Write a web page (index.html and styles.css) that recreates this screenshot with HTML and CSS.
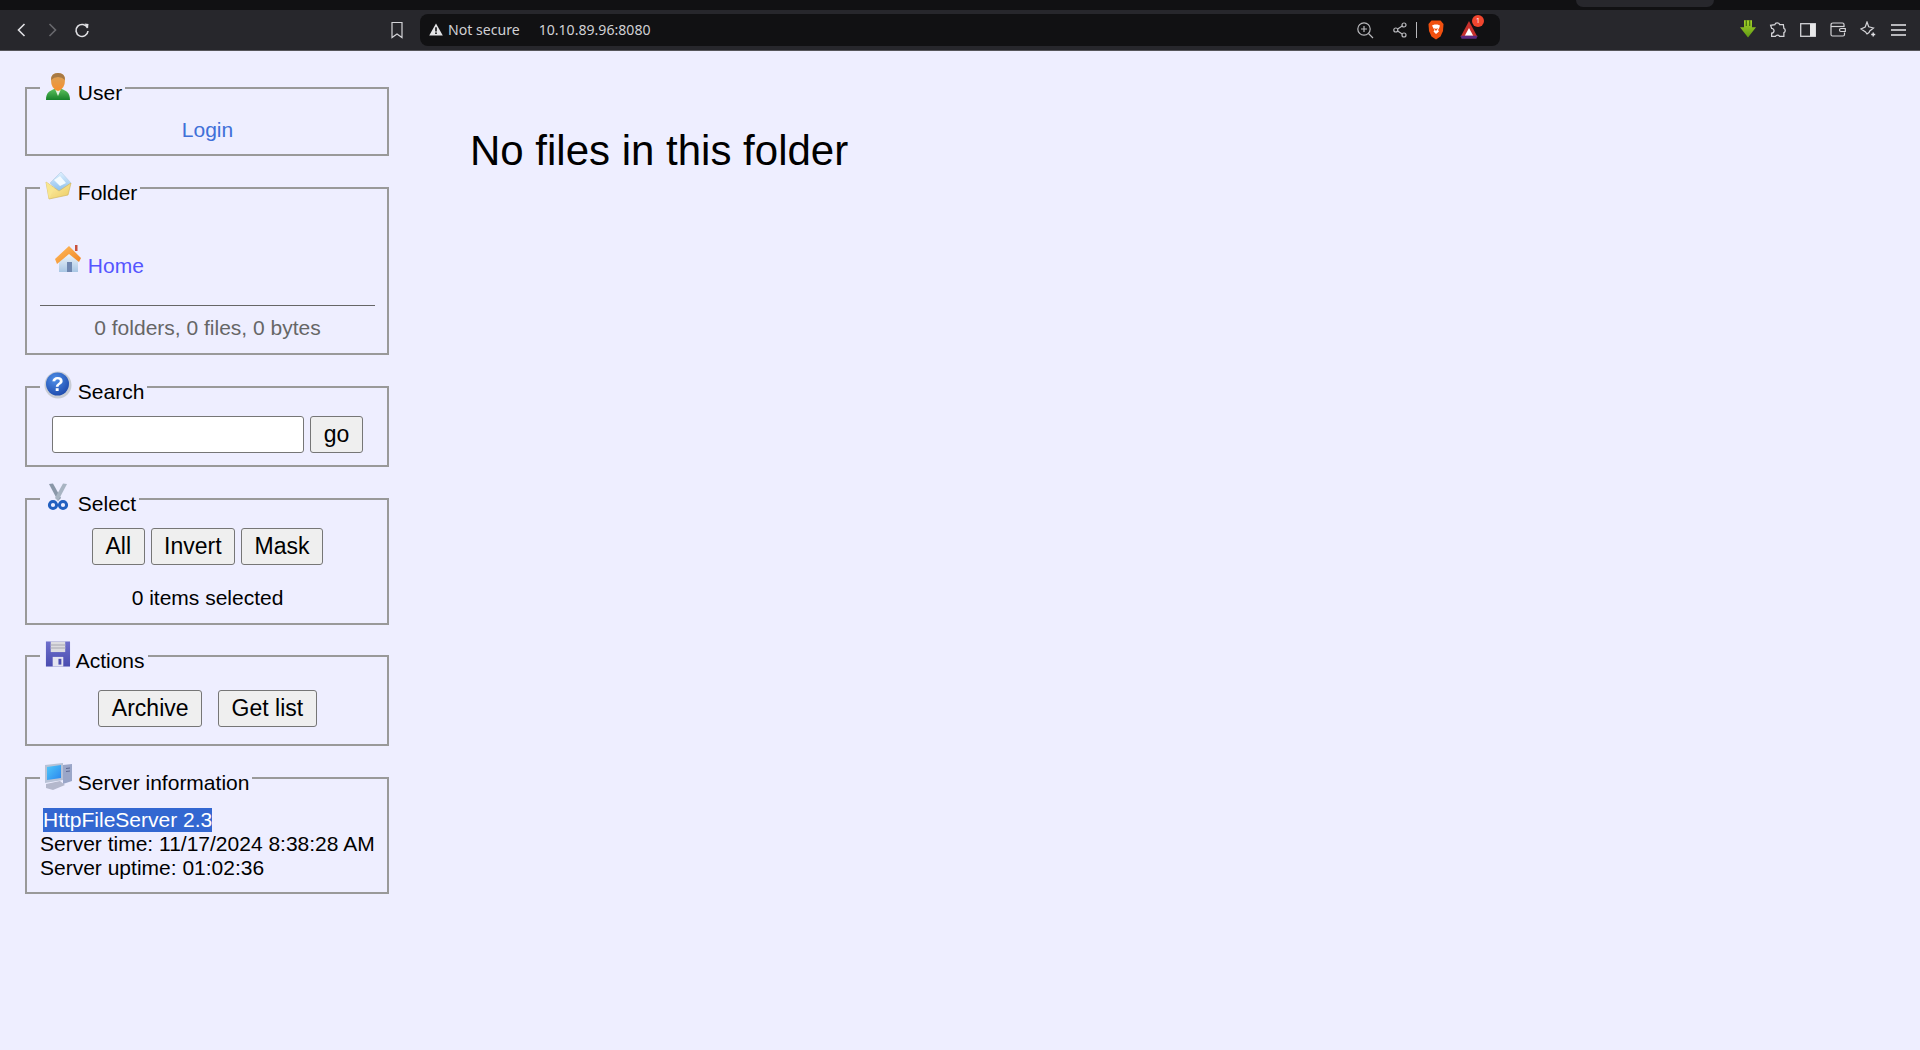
FILE: index.html
```html
<!DOCTYPE html>
<html lang="en">
<head>
  <meta charset="UTF-8">
  <title>HFS /</title>
  <link rel="stylesheet" href="styles.css">
</head>
<body>
  <svg class="defs" width="0" height="0" aria-hidden="true">
    <defs>
      <linearGradient id="g-skin" x1="0" y1="0" x2="0" y2="1"><stop offset="0" stop-color="#d9a45c"/><stop offset="1" stop-color="#f58f2e"/></linearGradient>
      <linearGradient id="g-green" x1="0" y1="0" x2="0" y2="1"><stop offset="0" stop-color="#5cbf5c"/><stop offset="1" stop-color="#16812a"/></linearGradient>
      <linearGradient id="g-env" x1="0" y1="0" x2="1" y2="1"><stop offset="0" stop-color="#fff2b0"/><stop offset="1" stop-color="#eccb60"/></linearGradient>
      <linearGradient id="g-sheet" x1="0" y1="0" x2="0" y2="1"><stop offset="0" stop-color="#dff0ff"/><stop offset="1" stop-color="#7fb8ea"/></linearGradient>
      <linearGradient id="g-roof" x1="0" y1="0" x2="1" y2="1"><stop offset="0" stop-color="#ffc060"/><stop offset="1" stop-color="#f08020"/></linearGradient>
      <linearGradient id="g-wall" x1="0" y1="0" x2="0" y2="1"><stop offset="0" stop-color="#ffffff"/><stop offset="1" stop-color="#a8c6e4"/></linearGradient>
      <radialGradient id="g-ball" cx="0.4" cy="0.3" r="0.8"><stop offset="0" stop-color="#4f8fe8"/><stop offset="1" stop-color="#1a45a8"/></radialGradient>
      <linearGradient id="g-disk" x1="0" y1="0" x2="0" y2="1"><stop offset="0" stop-color="#6f70cc"/><stop offset="1" stop-color="#4a4cb0"/></linearGradient>
      <linearGradient id="g-screen" x1="0" y1="0" x2="1" y2="1"><stop offset="0" stop-color="#50c8fa"/><stop offset="1" stop-color="#2a86ee"/></linearGradient>
      <linearGradient id="g-arrow" x1="0" y1="0" x2="0" y2="1"><stop offset="0" stop-color="#a6d32a"/><stop offset="1" stop-color="#5f9a14"/></linearGradient>
    </defs>
  </svg>

  <div class="tabstrip"><div class="tab-edge"></div></div>

  <header class="toolbar">
    <div class="nav-left">
      <button class="tb-btn"><svg width="16" height="16" viewBox="0 0 16 16" class="line"><path d="M10.5 2 4.5 8l6 6"/></svg></button>
      <button class="tb-btn dim"><svg width="16" height="16" viewBox="0 0 16 16" class="line"><path d="M5.5 2l6 6-6 6"/></svg></button>
      <button class="tb-btn"><svg width="18" height="18" viewBox="0 0 18 18" class="line"><path d="M14.5 7A6 6 0 1 0 15 10"/><path class="solid" d="M11.5 2.5 15.5 3l-.5 4.500z"/></svg></button>
      <button class="tb-btn bookmark"><svg width="16" height="18" viewBox="0 0 16 18" class="line thin"><path d="M3 1.500h10v15l-5-3.500-5 3.500z"/></svg></button>
    </div>

    <div class="urlbar">
      <svg class="warn" width="14" height="13" viewBox="0 0 14 13"><path d="M7 0.500 13.800 12.500H0.200z" fill="#e4e4e6"/><rect x="6.200" y="4.300" width="1.600" height="4.200" fill="#111113"/><rect x="6.200" y="9.400" width="1.600" height="1.600" fill="#111113"/></svg>
      <span class="secure">Not secure</span>
      <span class="address">10.10.89.96:8080</span>
      <div class="url-tools">
        <svg width="18" height="18" viewBox="0 0 18 18" class="line thin"><circle cx="8" cy="8" r="6.200"/><path d="M12.500 12.500 17 17M8 5v6M5 8h6"/></svg>
        <svg class="share" width="14" height="16" viewBox="0 0 14 16"><g fill="none" stroke="#b9b9bd" stroke-width="1.200"><circle cx="2.800" cy="8" r="2"/><circle cx="11" cy="3" r="2"/><circle cx="11" cy="13" r="2"/><path d="M4.600 7 9.200 4M4.600 9l4.600 3"/></g></svg>
        <span class="url-sep"></span>
        <svg class="brave" width="16" height="20" viewBox="0 0 16 20"><path d="M3.500 0.500h9L15.500 4 15 11l-2.500 5.500L8 19.500 3.500 16.500 1 11 .5 4z" fill="#f1500f"/><path d="M4 5.500 6.500 4.500h3l2.500 1-.8 2.500-1.200 2 1 1.500L8 14l-2.500-2.500 1-1.500-1.200-2z" fill="#fff"/><path d="M6 8l1.500.8H8.500L10 8 8.700 10.500H7.300z" fill="#f1500f"/></svg>
        <span class="bat">
          <svg width="18" height="18" viewBox="0 0 16 17"><path d="M8 0 16 15H0z" fill="#c8302c"/><path d="M8 6.500 12 14H4z" fill="#fff"/><path d="M0 14h16l-1 2.800H1z" fill="#5e2a80"/></svg>
          <span class="bat-badge">1</span>
        </span>
      </div>
    </div>

    <div class="tools">
      <button class="tb-btn"><svg width="16" height="19" viewBox="0 0 14 16"><path d="M3.500 0h7v6H14l-7 9-7-9h3.500z" fill="url(#g-arrow)"/><path d="M5 0h1v5H5zM8 0h1v5H8z" fill="#3e6b0c"/></svg></button>
      <button class="tb-btn puzzle"><svg width="17" height="17" viewBox="0 0 16 16" class="line thin"><path d="M5.500 3.500a2.300 2.300 0 0 1 4.500 0h3.500l.5 3.500a2.200 2.200 0 0 1 0 4v3.500H10a2.200 2.200 0 0 0-4 0H2.500V11.500a2.200 2.200 0 0 0 0-4.500L1.500 4z"/></svg></button>
      <button class="tb-btn"><svg width="16" height="14" viewBox="0 0 16 14"><rect x="0.700" y="0.700" width="14.600" height="12.600" fill="none" stroke="#d4d4d8" stroke-width="1.300"/><rect x="10" y="1" width="5.500" height="12" fill="#e8e8ea"/></svg></button>
      <button class="tb-btn"><svg width="16" height="15" viewBox="0 0 16 15" class="line thin"><path d="M14 4.500V2.500Q14 1 12.500 1H3Q1 1 1 3v9.500Q1 14 2.500 14H13q1.500 0 1.500-1.500V10.500"/><path d="M1 4.500h13.500"/><path d="M15.300 6.500H11q-1.500 0-1.500 1.500T11 9.500h4.300z"/></svg></button>
      <button class="tb-btn"><svg width="16" height="17" viewBox="0 0 16 17" class="line thin"><path d="M7 1l1.700 4.800L13.500 7l-3.700 3-.8 1.500L7 13l-1.500-2L1 8l4.200-2z"/><path class="solid" d="M12.500 11.500h1.400v1.300h1.300v1.400h-1.300v1.300h-1.400v-1.300h-1.300v-1.400h1.300z"/></svg></button>
      <button class="tb-btn"><svg width="15" height="12" viewBox="0 0 15 12" class="line menu"><path d="M0 1h15M0 6h15M0 11h15"/></svg></button>
    </div>
  </header>

  <div class="page">
    <aside class="panels">
      <fieldset class="panel panel-user">
        <legend>
          <svg class="ico" viewBox="0 0 28 28"><path d="M2 28c0-8 4-9 8-11h8c4 2 8 3 8 11z" fill="url(#g-green)"/><path d="M11 17h6l-3 7z" fill="#e6f3e0"/><path d="M7 8q0-7 7-7t7 7q0 9-7 11-7-2-7-11z" fill="url(#g-skin)"/><path d="M7 8q0-7 7-7t7 7q-3-3-7-3T7 8z" fill="#a87a45"/></svg>
          User
        </legend>
        <div class="center"><a class="login" href="#">Login</a></div>
      </fieldset>

      <fieldset class="panel panel-folder">
        <legend>
          <svg class="ico" viewBox="0 0 28 28"><path d="M6 11 17 0l10 11-10 11z" fill="url(#g-sheet)" stroke="#b4cce2" stroke-width=".6"/><path d="M10 8l6-4 6 7-6 3z" fill="#f4fbff"/><path d="M2 10l13 9 12-8-3 12-19 4z" fill="url(#g-env)" stroke="#d2b860" stroke-width=".7"/><path d="M2 10l8 6-5 11z" fill="#f8e690"/></svg>
          Folder
        </legend>
        <div class="home-row">
          <svg class="ico" viewBox="0 0 28 28"><path d="M5 13 15 5l9 8v14H5z" fill="url(#g-wall)"/><path d="M13 17h5v10h-5z" fill="#6f87b0"/><path d="M1 14 15 1l12 12-2 4-10-8L3 19z" fill="url(#g-roof)"/><path d="M21 0h2.500v6H21z" fill="#c8503c"/></svg>
          <a class="home" href="#">Home</a>
        </div>
        <hr class="sep">
        <div class="center muted">0 folders, 0 files, 0 bytes</div>
      </fieldset>

      <fieldset class="panel panel-search">
        <legend>
          <svg class="ico" viewBox="0 0 28 28"><circle cx="14" cy="14" r="13.500" fill="#c8ccd4"/><circle cx="13.500" cy="13" r="11.500" fill="url(#g-ball)"/><text x="13.500" y="20" class="qmark">?</text></svg>
          Search
        </legend>
        <div class="search-row">
          <input class="search-input" type="text">
          <button class="btn">go</button>
        </div>
      </fieldset>

      <fieldset class="panel panel-select">
        <legend>
          <svg class="ico" viewBox="0 0 28 28"><path d="M5 1l4-.5L17 15l-3 3z" fill="#8a97a8"/><path d="M23 1l-4-.5L11 15l3 3z" fill="#a8b4c2"/><circle cx="9" cy="22" r="3.600" fill="none" stroke="#2260c0" stroke-width="3"/><circle cx="19" cy="22" r="3.600" fill="none" stroke="#2260c0" stroke-width="3"/></svg>
          Select
        </legend>
        <div class="btn-row">
          <button class="btn">All</button>
          <button class="btn">Invert</button>
          <button class="btn">Mask</button>
        </div>
        <div class="center selected">0 items selected</div>
      </fieldset>

      <fieldset class="panel panel-actions">
        <legend>
          <svg class="ico ico-save" viewBox="0 0 28 28"><path d="M2 1h25v26H2z" fill="url(#g-disk)"/><path d="M7 1h15v11H7z" fill="#dcdce0"/><path d="M7 4h15v1.500H7zM7 7h15v1.500H7z" fill="#b8b8c0"/><path d="M9 17h11v10H9z" fill="#e4e4f0"/><path d="M15 19h3v6h-3z" fill="#4a4cb0"/></svg>
          Actions
        </legend>
        <div class="btn-row wide">
          <button class="btn">Archive</button>
          <button class="btn">Get list</button>
        </div>
      </fieldset>

      <fieldset class="panel panel-server">
        <legend>
          <svg class="ico" viewBox="0 0 28 28"><path d="M19 3l9-1v17l-9 3z" fill="#9aa6c8"/><path d="M22 6l4-.5v1l-4 .5zM22 9l4-.5v1l-4 .5z" fill="#5d6890"/><path d="M1 3l18-2v17L1 21z" fill="#b8c2d6"/><path d="M3 5l14-2v13L3 18z" fill="url(#g-screen)"/><path d="M2 22l14-3 5 4-12 5-7-2z" fill="#b4b8cc"/></svg>
          Server information
        </legend>
        <div class="server-info">
          <div><span class="hilite">HttpFileServer 2.3</span></div>
          <div>Server time: 11/17/2024 8:38:28 AM</div>
          <div>Server uptime: 01:02:36</div>
        </div>
      </fieldset>
    </aside>

    <main class="files">
      <h1>No files in this folder</h1>
    </main>
  </div>
</body>
</html>
```

FILE: styles.css
```css
* {
  box-sizing: border-box;
}
html, body {
  height: 100%;
}
body {
  margin: 0;
  background-color: #eeeeff;
  color: #000;
  font-family: "Liberation Sans", Arial, sans-serif;
  font-size: 21px;
  line-height: 24px;
  overflow: hidden;
}
.defs {
  display: block;
  height: 0;
}

/* browser chrome */
.tabstrip {
  height: 10px;
  background-color: #111113;
  padding-left: 1576px;
}
.tab-edge {
  width: 138px;
  height: 7px;
  background-color: #27272c;
  border-radius: 0 0 8px 8px;
}
.toolbar {
  height: 41px;
  background-color: #27272c;
  border-bottom: 1px solid #55555a;
  display: flex;
  align-items: center;
  padding-bottom: 1px;
  font-family: "Noto Sans", sans-serif;
  font-size: 14.1px;
  color: #d0d0d4;
}
.nav-left {
  width: 420px;
  display: flex;
  align-items: center;
  padding-left: 7px;
}
.tb-btn {
  width: 30px;
  height: 30px;
  padding: 0;
  border: none;
  background: none;
  display: flex;
  align-items: center;
  justify-content: center;
}
.tb-btn.dim {
  opacity: 0.35;
}
.tb-btn.bookmark {
  margin-left: auto;
  margin-right: 8px;
}
.tb-btn.puzzle svg {
  margin-right: 2px;
}
.line {
  fill: none;
  stroke: #e0e0e4;
  stroke-width: 1.6;
}
.line.thin {
  stroke: #d4d4d8;
  stroke-width: 1.2;
}
.line.menu {
  stroke: #e8e8ea;
  stroke-width: 1.4;
}
.line .solid {
  fill: #e0e0e4;
  stroke: none;
}
.urlbar {
  width: 1080px;
  height: 32px;
  background-color: #111113;
  border-radius: 8px;
  display: flex;
  align-items: center;
  padding: 0 18px 0 9px;
}
.warn {
  margin-right: 5px;
}
.secure {
  margin-right: 19px;
}
.url-tools {
  margin-left: auto;
  display: flex;
  align-items: center;
}
.url-tools .line.thin {
  stroke: #b9b9bd;
}
.share {
  margin-left: 19px;
}
.url-sep {
  width: 1px;
  height: 16px;
  background-color: #b9b9bd;
  margin: 0 11px 0 9px;
}
.bat {
  position: relative;
  display: flex;
  margin-left: 16px;
  margin-right: 4px;
}
.bat-badge {
  position: absolute;
  top: -6px;
  right: -6px;
  width: 12px;
  height: 12px;
  border-radius: 50%;
  background-color: #f0462e;
  color: #fff;
  font-size: 7px;
  line-height: 12px;
  text-align: center;
}
.tools {
  flex: 1;
  display: flex;
  justify-content: flex-end;
  padding-right: 7px;
}

/* hfs page */
.page {
  display: flex;
  align-items: flex-start;
  padding: 19px 0 0 25px;
}
.panels {
  width: 364px;
  flex: none;
}
.panel {
  margin: 0 0 14px;
  padding: 0 12px 12px 13px;
  border: 2px solid #999;
  min-width: 0;
}
.panel legend {
  padding: 2px 3px 0 4px;
  white-space: nowrap;
}
.ico {
  width: 28px;
  height: 28px;
  filter: blur(0.4px);
}
.ico-save {
  width: 27px;
}
.qmark {
  fill: #fff;
  font-family: "Liberation Sans", Arial, sans-serif;
  font-size: 20px;
  font-weight: bold;
  text-anchor: middle;
}
.center {
  text-align: center;
}
a {
  text-decoration: none;
}
.login {
  color: #4070d8;
}
.home {
  color: #5555ff;
}
.muted {
  color: #666;
}
.home-row {
  padding: 40px 0 0 14px;
}
.sep {
  margin: 27px 0 10px;
  border: none;
  border-top: 1px solid #666;
}
.panel-user .center {
  padding-top: 13px;
}
.panel-folder {
  padding-bottom: 13px;
}
.search-row {
  display: flex;
  justify-content: center;
  gap: 6px;
  padding: 12px 0 0;
}
.search-input {
  width: 252px;
  height: 37px;
  background-color: #fff;
  border: 1px solid #767676;
  border-radius: 3px;
}
.btn {
  height: 37px;
  padding: 0 12.5px;
  background-color: #efefef;
  border: 1px solid #767676;
  border-radius: 3px;
  color: #000;
  font-family: inherit;
  font-size: 23px;
}
.btn-row {
  display: flex;
  justify-content: center;
  gap: 6px;
  padding-top: 12px;
}
.btn-row.wide {
  gap: 16px;
  padding-top: 17px;
}
.panel-select {
  margin-bottom: 13px;
  padding-bottom: 13px;
}
.panel-actions {
  padding-bottom: 17px;
}
.selected {
  padding-top: 21px;
}
.server-info {
  padding-top: 13px;
}
.hilite {
  display: inline-block;
  margin-left: 3px;
  background-color: #3367d1;
  color: #fff;
}
.files {
  padding: 56px 0 0 81px;
}
.files h1 {
  margin: 0;
  font-size: 42px;
  line-height: 50px;
  font-weight: normal;
}
```
